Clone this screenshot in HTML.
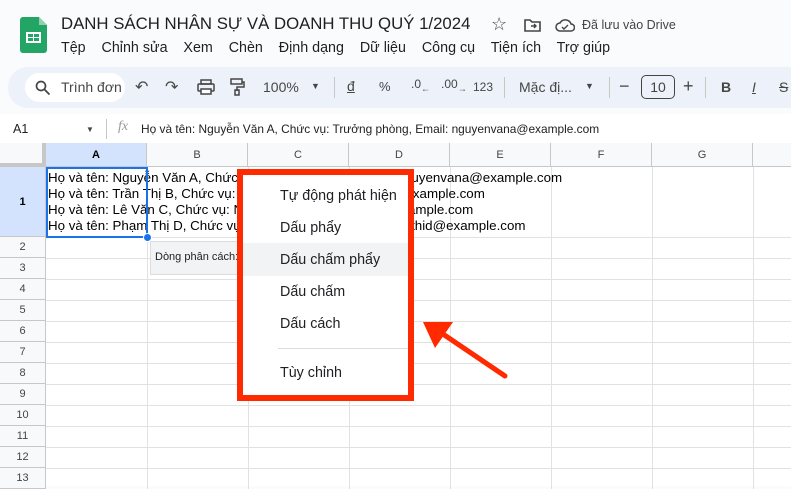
<!DOCTYPE html>
<html><head><meta charset="utf-8"><style>
*{box-sizing:border-box;margin:0;padding:0}
body{width:791px;height:486px;overflow:hidden;background:#f9fbfd;font-family:"Liberation Sans",Arial,sans-serif;position:relative;color:#202124}
.a{position:absolute;white-space:nowrap}
.tb{font-size:14px;color:#444746}
.col{position:absolute;top:143px;height:24px;border-right:1px solid #c7c7c7;border-bottom:1px solid #c7c7c7;background:#f8f9fa;font-size:11px;color:#444;text-align:center;line-height:24px}
.rh{position:absolute;left:0;width:46px;border-bottom:1px solid #c7c7c7;border-right:1px solid #c7c7c7;background:#f8f9fa;font-size:11px;color:#444;text-align:center}
.cell{font-size:13.35px;color:#000;line-height:16px}
.mi{position:absolute;left:280px;font-size:14.3px;color:#202124}
</style></head><body>
<svg class="a" style="left:20px;top:17px" width="27" height="36" viewBox="0 0 27 36"><path d="M0 3a3 3 0 0 1 3-3h16l8 8v25a3 3 0 0 1-3 3H3a3 3 0 0 1-3-3z" fill="#23a566"/><path d="M19 0v8h8z" fill="#8ed1b1"/><rect x="6" y="15" width="15" height="11" fill="#fff"/><rect x="8" y="17" width="5" height="3" fill="#23a566"/><rect x="14" y="17" width="5" height="3" fill="#23a566"/><rect x="8" y="21" width="5" height="3" fill="#23a566"/><rect x="14" y="21" width="5" height="3" fill="#23a566"/></svg>
<div class="a" style="left:61px;top:14px;font-size:16.8px;color:#1f1f1f">DANH SÁCH NHÂN SỰ VÀ DOANH THU QUÝ 1/2024</div>
<div class="a" style="left:491px;top:14px;font-size:18px;color:#444">☆</div>
<svg class="a" style="left:524px;top:18px" width="17" height="14"><path d="M1 2h5l2 2h8v9H1z" fill="none" stroke="#444" stroke-width="1.6"/><path d="M7 8h5M10 6l2 2-2 2" stroke="#444" stroke-width="1.4" fill="none"/></svg>
<svg class="a" style="left:555px;top:18px" width="20" height="14"><path d="M5 13a4 4 0 0 1 0-8 6 6 0 0 1 11 1 3.5 3.5 0 0 1 0 7z" fill="none" stroke="#444" stroke-width="1.5"/><path d="M7 9l2 2 4-4" fill="none" stroke="#444" stroke-width="1.4"/></svg>
<div class="a" style="left:582px;top:18px;font-size:12.5px;color:#444">Đã lưu vào Drive</div>
<div class="a" style="left:61px;top:40px;font-size:14.3px;color:#1f1f1f">Tệp&nbsp;&nbsp;&nbsp; Chỉnh sửa&nbsp;&nbsp;&nbsp; Xem&nbsp;&nbsp;&nbsp; Chèn&nbsp;&nbsp;&nbsp; Định dạng&nbsp;&nbsp;&nbsp; Dữ liệu&nbsp;&nbsp;&nbsp; Công cụ&nbsp;&nbsp;&nbsp; Tiện ích&nbsp;&nbsp;&nbsp; Trợ giúp</div>
<div class="a" style="left:8px;top:67px;width:800px;height:41px;background:#edf2fa;border-radius:20px"></div>
<div class="a" style="left:25px;top:73px;width:100px;height:29px;background:#fff;border-radius:15px"></div>
<svg class="a" style="left:35px;top:80px" width="16" height="16"><circle cx="6" cy="6" r="4.5" fill="none" stroke="#444" stroke-width="1.7"/><path d="M9.5 9.5l5 5" stroke="#444" stroke-width="1.8"/></svg>
<div class="a tb" style="left:61px;top:79px">Trình đơn</div>
<div class="a tb" style="left:135px;top:77px;font-size:16px">↶</div>
<div class="a tb" style="left:165px;top:77px;font-size:16px">↷</div>
<svg class="a" style="left:197px;top:79px" width="18" height="16"><rect x="4" y="1" width="10" height="4" fill="none" stroke="#444" stroke-width="1.5"/><rect x="1" y="5" width="16" height="7" rx="1" fill="none" stroke="#444" stroke-width="1.5"/><rect x="4" y="10" width="10" height="5" fill="#fff" stroke="#444" stroke-width="1.5"/></svg>
<svg class="a" style="left:229px;top:78px" width="16" height="18"><rect x="2" y="1" width="11" height="5" fill="none" stroke="#444" stroke-width="1.5"/><path d="M13 4h2v5H8v4" fill="none" stroke="#444" stroke-width="1.5"/><rect x="6" y="12" width="4" height="5" fill="none" stroke="#444" stroke-width="1.5"/></svg>
<div class="a tb" style="left:263px;top:79px">100%</div>
<div class="a tb" style="left:311px;top:81px;font-size:9px">▼</div>
<div class="a" style="left:334px;top:77px;width:1px;height:21px;background:#c7c7c7"></div>
<div class="a tb" style="left:347px;top:78px;text-decoration:underline">đ</div>
<div class="a tb" style="left:379px;top:79px;font-size:13px">%</div>
<div class="a tb" style="left:411px;top:77px;font-size:12px">.0<sub style="font-size:9px">←</sub></div>
<div class="a tb" style="left:441px;top:77px;font-size:12px">.00<sub style="font-size:9px">→</sub></div>
<div class="a tb" style="left:473px;top:80px;font-size:12px">123</div>
<div class="a" style="left:504px;top:77px;width:1px;height:21px;background:#c7c7c7"></div>
<div class="a tb" style="left:519px;top:79px">Mặc đị...</div>
<div class="a tb" style="left:585px;top:81px;font-size:9px">▼</div>
<div class="a" style="left:609px;top:77px;width:1px;height:21px;background:#c7c7c7"></div>
<div class="a tb" style="left:619px;top:76px;font-size:18px">−</div>
<div class="a" style="left:641px;top:75px;width:34px;height:24px;border:1px solid #444;border-radius:5px;font-size:14px;color:#444;text-align:center;line-height:22px">10</div>
<div class="a tb" style="left:683px;top:76px;font-size:18px">+</div>
<div class="a" style="left:705px;top:77px;width:1px;height:21px;background:#c7c7c7"></div>
<div class="a tb" style="left:721px;top:79px;font-weight:bold">B</div>
<div class="a tb" style="left:752px;top:79px;font-style:italic;text-decoration:underline">I</div>
<div class="a tb" style="left:779px;top:79px;text-decoration:line-through">S</div>
<div class="a" style="left:0;top:114px;width:791px;height:29px;background:#fff"></div>
<div class="a" style="left:13px;top:122px;font-size:12.5px">A1</div>
<div class="a" style="left:86px;top:125px;font-size:8px;color:#444">▼</div>
<div class="a" style="left:106px;top:119px;width:1px;height:20px;background:#c7c7c7"></div>
<div class="a" style="left:118px;top:119px;font-size:14px;font-style:italic;color:#999;font-family:'Liberation Serif',serif">fx</div>
<div class="a" style="left:141px;top:122px;font-size:11.9px">Họ và tên: Nguyễn Văn A, Chức vụ: Trưởng phòng, Email: nguyenvana@example.com</div>
<div class="a" style="left:0;top:143px;width:791px;height:343px;background:#fff"></div>
<div class="a" style="left:0;top:143px;width:46px;height:24px;background:#f8f9fa;border-right:4px solid #c7c7c7;border-bottom:4px solid #c7c7c7"></div>
<div class="col" style="left:46px;width:101px;background:#d3e3fd;color:#000;font-weight:bold">A</div>
<div class="col" style="left:147px;width:101px">B</div>
<div class="col" style="left:248px;width:101px">C</div>
<div class="col" style="left:349px;width:101px">D</div>
<div class="col" style="left:450px;width:101px">E</div>
<div class="col" style="left:551px;width:101px">F</div>
<div class="col" style="left:652px;width:101px">G</div>
<div class="col" style="left:753px;width:60px"></div>
<div class="rh" style="top:167px;height:70px;line-height:70px;background:#d3e3fd;color:#000;font-weight:bold">1</div>
<svg class="a" style="left:46px;top:167px" width="745" height="322">
<g stroke="#e1e1e1" stroke-width="1">
<path d="M0 70.5H745M0 91.5H745M0 112.5H745M0 133.5H745M0 154.5H745M0 175.5H745M0 196.5H745M0 217.5H745M0 238.5H745M0 259.5H745M0 280.5H745M0 301.5H745"/>
<path d="M101.5 0V322M202.5 0V322M303.5 0V322M404.5 0V322M505.5 0V322M606.5 0V322M707.5 0V322"/>
</g></svg>
<div class="rh" style="top:237px;height:21px;line-height:21px">2</div>
<div class="rh" style="top:258px;height:21px;line-height:21px">3</div>
<div class="rh" style="top:279px;height:21px;line-height:21px">4</div>
<div class="rh" style="top:300px;height:21px;line-height:21px">5</div>
<div class="rh" style="top:321px;height:21px;line-height:21px">6</div>
<div class="rh" style="top:342px;height:21px;line-height:21px">7</div>
<div class="rh" style="top:363px;height:21px;line-height:21px">8</div>
<div class="rh" style="top:384px;height:21px;line-height:21px">9</div>
<div class="rh" style="top:405px;height:21px;line-height:21px">10</div>
<div class="rh" style="top:426px;height:21px;line-height:21px">11</div>
<div class="rh" style="top:447px;height:21px;line-height:21px">12</div>
<div class="rh" style="top:468px;height:21px;line-height:21px">13</div>
<div class="a cell" style="left:48px;top:170px">Họ và tên: Nguyễn Văn A, Chức vụ: Trưởng phòng, Email: nguyenvana@example.com<br>Họ và tên: Trần Thị B, Chức vụ: Nhân viên, Email: tranthib@example.com<br>Họ và tên: Lê Văn C, Chức vụ: Nhân viên, Email: levanc@example.com<br>Họ và tên: Phạm Thị D, Chức vụ: Trưởng nhóm, Email: phamthid@example.com</div>
<div class="a" style="left:46px;top:167px;width:102px;height:71px;border:2px solid #1a73e8"></div>
<div class="a" style="left:143px;top:233px;width:9px;height:9px;border-radius:50%;background:#1a73e8;border:1px solid #fff"></div>
<div class="a" style="left:150px;top:241px;width:110px;height:34px;background:#f1f3f4;border:1px solid #dadce0"></div>
<div class="a" style="left:155px;top:251px;font-size:11px;color:#202124">Dòng phân cách:</div>
<div class="a" style="left:237px;top:169px;width:177px;height:232px;background:#fff;border:6px solid #ff2a00"></div>
<div class="a" style="left:243px;top:243px;width:165px;height:33px;background:#f1f3f4"></div>
<div class="mi" style="top:188px">Tự động phát hiện</div>
<div class="mi" style="top:220px">Dấu phẩy</div>
<div class="mi" style="top:252px">Dấu chấm phẩy</div>
<div class="mi" style="top:284px">Dấu chấm</div>
<div class="mi" style="top:316px">Dấu cách</div>
<div class="a" style="left:278px;top:348px;width:130px;height:1px;background:#dadce0"></div>
<div class="mi" style="top:365px">Tùy chỉnh</div>
<svg class="a" style="left:415px;top:310px" width="100" height="75"><path d="M90 66L22 20" stroke="#ff2a00" stroke-width="5" stroke-linecap="round"/><path d="M8 12L38 12L20 38Z" fill="#ff2a00"/></svg>
</body></html>
